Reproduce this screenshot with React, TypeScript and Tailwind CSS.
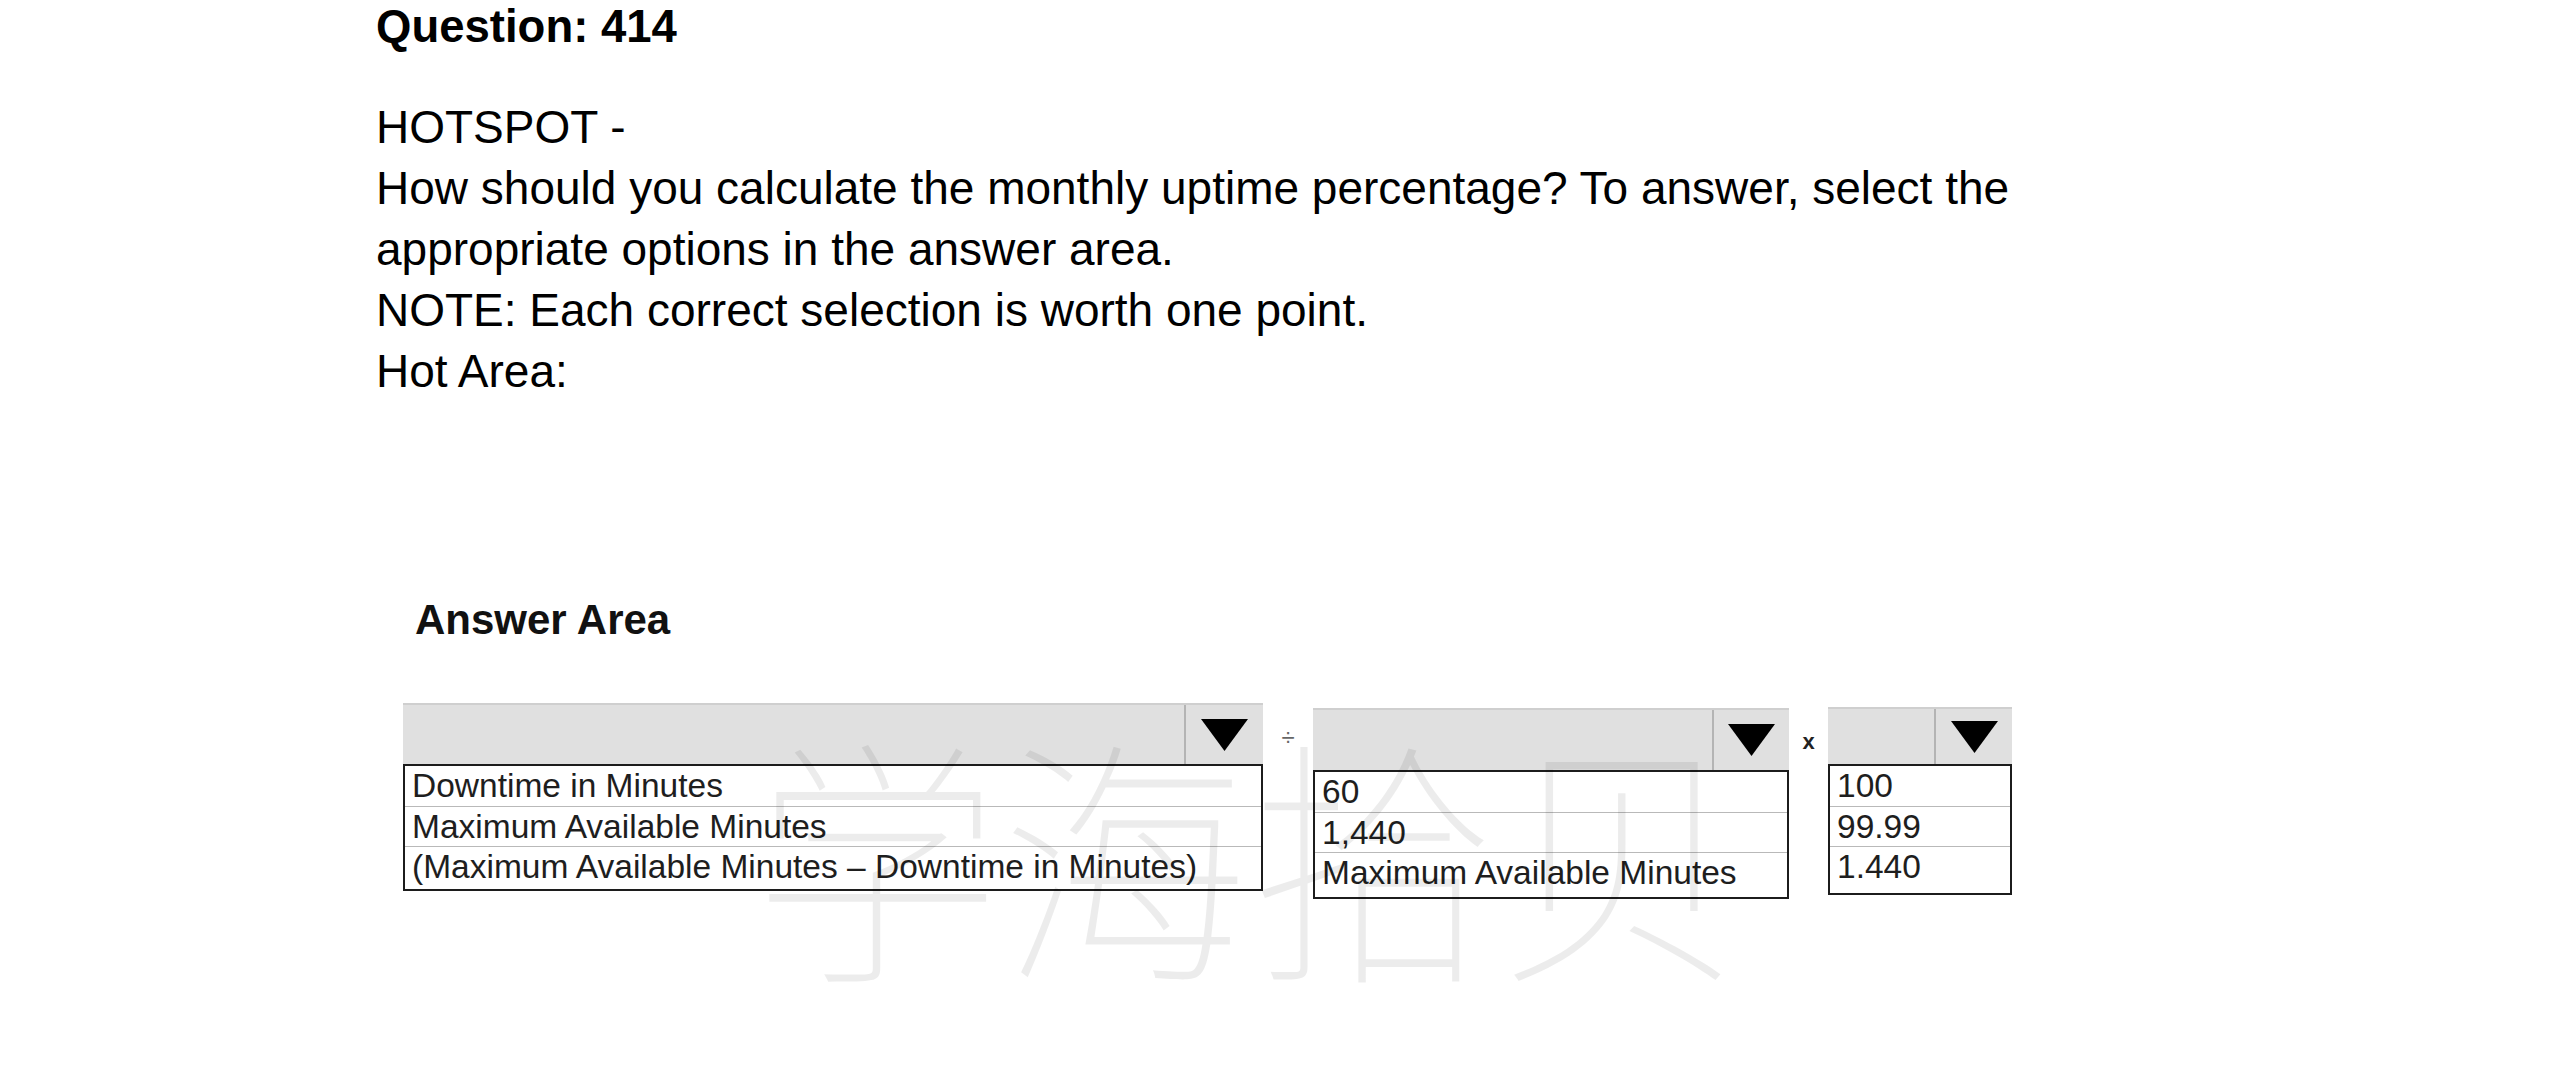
import React from 'react';

interface DropdownProps {
    options: string[];
    boxClass: string;
    headerClass: string;
    arrowClass: string;
    padClass: string;
}

const Caret: React.FC = () => (
    <svg width="47" height="32" viewBox="0 0 47 32">
        <polygon points="0,0 47,0 23.5,32" fill="#000" />
    </svg>
);

// caixa de seleção aberta, como na imagem da prova
const Dropdown: React.FC<DropdownProps> = ({ options, boxClass, headerClass, arrowClass, padClass }) => {
    return (
        <div className={`flex flex-col ${boxClass}`}>
            <div className={`flex bg-[#e0e0e0] border-t-2 border-[#cfcfcf] ${headerClass}`}>
                <div className="flex-1" />
                <div className={`flex items-center justify-center border-l-2 border-[#b4b4b4] ${arrowClass}`}>
                    <Caret />
                </div>
            </div>
            <div className={`flex flex-col border-2 border-[#1c1c1c] bg-white ${padClass}`}>
                {options.map((opt, i) => (
                    <div
                        key={opt}
                        className={`flex h-[40px] items-center pl-[7px] text-[33.5px] leading-none text-[#1e1e1e] whitespace-nowrap ${
                            i > 0 ? 'border-t border-[#b9b9b9]' : ''
                        }`}
                    >
                        {opt}
                    </div>
                ))}
            </div>
        </div>
    );
};

const App: React.FC = () => {
    return (
        <div className="relative min-h-screen bg-white font-['Liberation_Sans',Arial,sans-serif] text-black">
            <div className="relative pl-[376px]">
                <h1 className="text-[45.5px] font-bold leading-[54px]">Question: 414</h1>

                <div className="mt-[43px] w-[1720px] text-[46px] leading-[61px]">
                    <p>HOTSPOT -</p>
                    <p>
                        How should you calculate the monthly uptime percentage? To answer, select the appropriate
                        options in the answer area.
                    </p>
                    <p>NOTE: Each correct selection is worth one point.</p>
                    <p>Hot Area:</p>
                </div>

                <h2 className="ml-[39px] mt-[198px] text-[42px] font-bold leading-[40px] text-[#111]">Answer Area</h2>

                <div className="ml-[27px] mt-[63px] flex items-start">
                    <Dropdown
                        options={[
                            'Downtime in Minutes',
                            'Maximum Available Minutes',
                            '(Maximum Available Minutes – Downtime in Minutes)',
                        ]}
                        boxClass="w-[860px]"
                        headerClass="h-[61px]"
                        arrowClass="w-[79px]"
                        padClass="pb-[3px]"
                    />
                    <div className="flex h-[70px] w-[50px] items-center justify-center text-[24px] text-[#666]">÷</div>
                    <Dropdown
                        options={['60', '1,440', 'Maximum Available Minutes']}
                        boxClass="mt-[5px] w-[476px]"
                        headerClass="h-[62px]"
                        arrowClass="w-[77px]"
                        padClass="pb-[5px]"
                    />
                    <div className="flex h-[76px] w-[39px] items-center justify-center text-[22px] font-bold text-[#222]">
                        x
                    </div>
                    <Dropdown
                        options={['100', '99.99', '1.440']}
                        boxClass="mt-[4px] w-[184px]"
                        headerClass="h-[57px]"
                        arrowClass="w-[78px]"
                        padClass="pb-[7px]"
                    />
                </div>
            </div>

            {/* marca d'água por cima, bem clara */}
            <div className="pointer-events-none absolute left-[753px] top-[732px] origin-bottom scale-y-105 select-none whitespace-nowrap font-['Noto_Sans_CJK_SC',sans-serif] text-[248px] font-thin leading-none text-black/[0.075]">
                学海拾贝
            </div>
        </div>
    );
};

export default App;
